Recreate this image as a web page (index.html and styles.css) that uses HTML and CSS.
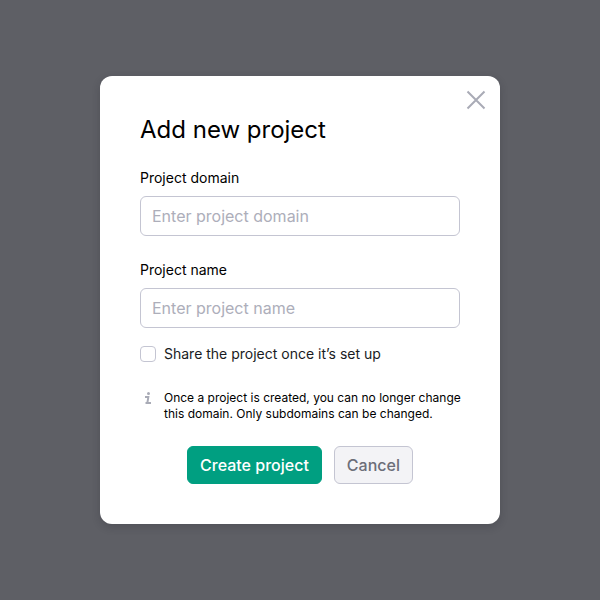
FILE: index.html
```html
<!DOCTYPE html>
<html lang="en">
<head>
<meta charset="utf-8">
<meta name="viewport" content="width=device-width, initial-scale=1">
<title>Add new project</title>
<link rel="stylesheet" href="styles.css">
</head>
<body>
<div class="overlay">
  <form class="modal" role="dialog" aria-modal="true" aria-labelledby="title">
    <button class="close" type="button" aria-label="Close">
      <svg viewBox="0 0 20 20" width="20" height="20" aria-hidden="true"><path d="M1.5 1.5l17 17M18.5 1.5l-17 17"/></svg>
    </button>
    <h1 class="title" id="title">Add new project</h1>
    <label class="label" for="domain">Project domain</label>
    <input class="input" id="domain" type="text" placeholder="Enter project domain">
    <label class="label label-next" for="name">Project name</label>
    <input class="input" id="name" type="text" placeholder="Enter project name">
    <label class="check"><input class="checkbox" type="checkbox">Share the project once it’s set up</label>
    <div class="note">
      <svg class="info" viewBox="0 0 16 16" width="16" height="16" aria-hidden="true"><circle cx="8.5" cy="3.5" r="1.5"/><path d="M5 6H9.5L8.500 12H11V14H5.500V12H6.500L7.200 8H5z"/></svg>
      <p class="note-text">Once a project is created, you can no longer change this domain. Only subdomains can be changed.</p>
    </div>
    <div class="actions">
      <button class="button primary" type="submit">Create project</button>
      <button class="button secondary" type="button">Cancel</button>
    </div>
  </form>
</div>
</body>
</html>
```

FILE: styles.css
```css
* { box-sizing: border-box; }
body {
  margin: 0;
  font-family: Inter, sans-serif;
  color: #000;
}
.overlay {
  min-height: 100vh;
  display: flex;
  align-items: center;
  justify-content: center;
  padding: 40px;
  background: #5e5f65;
}
.modal {
  position: relative;
  width: 100%;
  max-width: 400px;
  padding: 40px;
  border-radius: 12px;
  background: #fff;
  box-shadow: 0 3px 8px rgba(25, 27, 35, 0.2);
}
.close {
  position: absolute;
  top: 14px;
  right: 14px;
  display: flex;
  padding: 0;
  border: 0;
  background: none;
  cursor: pointer;
}
.close path { fill: none; stroke: #a9abb6; stroke-width: 2; }
.title { margin: 0 0 24px; font-size: 24px; line-height: 28px; font-weight: 400; }
.label { display: block; margin-bottom: 8px; font-size: 14px; line-height: 20px; }
.label-next { margin-top: 24px; }
.input {
  display: block;
  width: 100%;
  height: 40px;
  padding: 0 11px;
  border: 1px solid #c4c5d2;
  border-radius: 6px;
  font: 16px Inter, sans-serif;
  color: #191b23;
}
.input::placeholder { color: #adaeba; opacity: 1; }
.check {
  display: flex;
  align-items: center;
  gap: 8px;
  margin-top: 16px;
  font-size: 14px;
  line-height: 20px;
  color: #191b23;
}
.checkbox {
  appearance: none;
  width: 16px;
  height: 16px;
  margin: 0;
  border: 1px solid #c4c5d2;
  border-radius: 4px;
}
/* The note may run slightly into the dialog's right padding. */
.note { display: flex; gap: 8px; margin: 26px -8px 0 0; }
.info { flex: none; fill: #a9abb6; }
.note-text { margin: 0; font-size: 12px; line-height: 16px; }
.actions { display: flex; justify-content: center; gap: 12px; margin-top: 24px; }
.button {
  height: 38px;
  padding: 0 12px;
  border: 1px solid #c4c5d2;
  border-radius: 6px;
  font: 500 16px Inter, sans-serif;
  cursor: pointer;
}
.primary { border-color: #009f81; background: #009f81; color: #fff; }
.secondary { background: #f3f3f6; color: #6c6e79; }
```
